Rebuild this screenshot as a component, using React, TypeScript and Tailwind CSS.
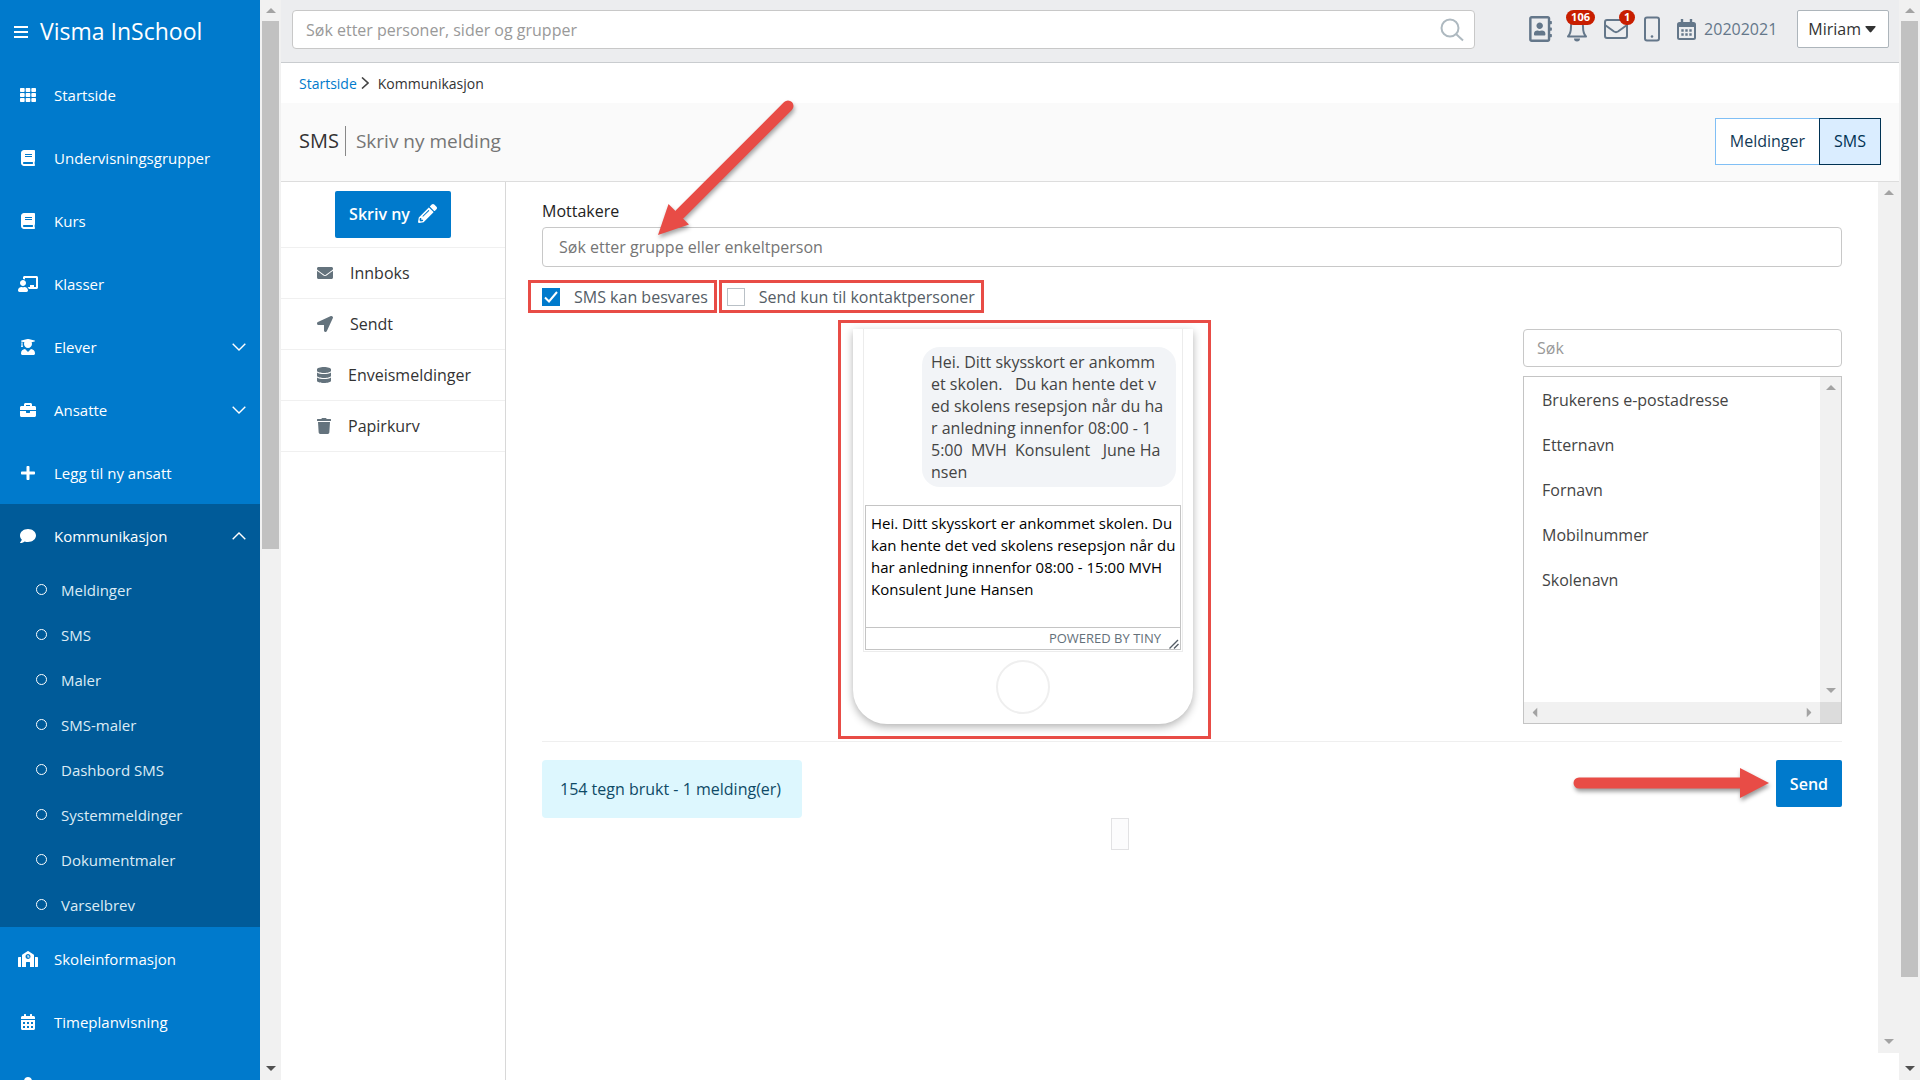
import type { ReactNode } from 'react';
import {
  FaBook,
  FaBriefcase,
  FaCalendarAlt,
  FaChalkboardTeacher,
  FaComment,
  FaDatabase,
  FaEnvelope,
  FaLocationArrow,
  FaPencilAlt,
  FaPlus,
  FaRegAddressBook,
  FaSchool,
  FaTh,
  FaTrash,
  FaUser,
  FaUserGraduate,
} from 'react-icons/fa';

const communicationLinks = [
  'Meldinger',
  'SMS',
  'Maler',
  'SMS-maler',
  'Dashbord SMS',
  'Systemmeldinger',
  'Dokumentmaler',
  'Varselbrev',
];

const folders = [
  { label: 'Innboks', icon: <FaEnvelope className="size-4" /> },
  { label: 'Sendt', icon: <FaLocationArrow className="size-4" /> },
  { label: 'Enveismeldinger', icon: <FaDatabase className="h-4 w-[14px]" /> },
  { label: 'Papirkurv', icon: <FaTrash className="h-4 w-[14px]" /> },
];

const mergeFields = ['Brukerens e-postadresse', 'Etternavn', 'Fornavn', 'Mobilnummer', 'Skolenavn'];

const previewText = [
  'Hei. Ditt skysskort er ankomm',
  'et skolen.   Du kan hente det v',
  'ed skolens resepsjon når du ha',
  'r anledning innenfor 08:00 - 1',
  '5:00  MVH  Konsulent   June Ha',
  'nsen',
].join('\n');

const messageText = [
  'Hei. Ditt skysskort er ankommet skolen. Du',
  'kan hente det ved skolens resepsjon når du',
  'har anledning innenfor 08:00 - 15:00 MVH',
  'Konsulent June Hansen',
].join('\n');

function Arrow({ className }: { className: string }) {
  return (
    <svg viewBox="0 0 10 5" className={`h-[5px] w-[10px] shrink-0 ${className}`} fill="currentColor">
      <path d="M0 5 5 0l5 5z" />
    </svg>
  );
}

function Scrollbar({ thumb, className = '' }: { thumb?: string; className?: string }) {
  return (
    <div className={`flex w-[21px] shrink-0 flex-col items-center bg-[#f1f1f1] ${className}`}>
      <div className="flex h-[21px] shrink-0 items-center">
        <Arrow className="text-[#a3a3a3]" />
      </div>
      <div className="min-h-0 w-full flex-1 px-[2px]">{thumb && <div className={`bg-[#c1c1c1] ${thumb}`} />}</div>
      <div className="flex h-6 shrink-0 items-center">
        <Arrow className={thumb ? 'rotate-180 text-[#505050]' : 'rotate-180 text-[#a3a3a3]'} />
      </div>
    </div>
  );
}

function Chevron({ open = false }: { open?: boolean }) {
  return (
    <svg viewBox="0 0 14 8" className={`h-2 w-[14px] ${open ? 'rotate-180' : ''}`} fill="none" stroke="currentColor" strokeWidth="1.4">
      <path d="M.7.7 7 7 13.3.7" />
    </svg>
  );
}

function NavItem({ icon, label, chevron }: { icon: ReactNode; label: string; chevron?: ReactNode }) {
  return (
    <a href="#" className="flex h-[63px] items-center pr-[14px] pl-[18px]">
      <span className="flex w-5 shrink-0 justify-center">{icon}</span>
      <span className="ml-4 flex-1 pt-[2px]">{label}</span>
      {chevron}
    </a>
  );
}

function Sidebar() {
  return (
    <aside className="flex w-[281px] shrink-0">
      <nav className="min-w-0 flex-1 overflow-hidden bg-[#007acc] text-[15px] text-white">
        <div className="flex h-[63px] items-center gap-3 pl-[14px]">
          <button type="button" aria-label="Meny" className="flex w-[14px] flex-col gap-[3px]">
            <span className="h-[2px] bg-white" />
            <span className="h-[2px] bg-white" />
            <span className="h-[2px] bg-white" />
          </button>
          <span className="text-[23px] font-medium">Visma InSchool</span>
        </div>
        <NavItem icon={<FaTh className="size-4" />} label="Startside" />
        <NavItem icon={<FaBook className="size-4" />} label="Undervisningsgrupper" />
        <NavItem icon={<FaBook className="size-4" />} label="Kurs" />
        <NavItem icon={<FaChalkboardTeacher className="h-4 w-5" />} label="Klasser" />
        <NavItem icon={<FaUserGraduate className="size-4" />} label="Elever" chevron={<Chevron />} />
        <NavItem icon={<FaBriefcase className="size-4" />} label="Ansatte" chevron={<Chevron />} />
        <NavItem icon={<FaPlus className="size-4" />} label="Legg til ny ansatt" />
        <div className="bg-[#005b99]">
          <NavItem icon={<FaComment className="size-4" />} label="Kommunikasjon" chevron={<Chevron open />} />
          {communicationLinks.map((label) => (
            <a key={label} href="#" className="flex h-[45px] items-center gap-[14px] pl-9 text-[#dcebf5]">
              <span className="size-[11px] rounded-full border border-white" />
              <span className="pt-[2px]">{label}</span>
            </a>
          ))}
        </div>
        <NavItem icon={<FaSchool className="h-4 w-5" />} label="Skoleinformasjon" />
        <NavItem icon={<FaCalendarAlt className="size-4" />} label="Timeplanvisning" />
        <a href="#" aria-label="Bruker" className="flex h-[63px] items-center pl-5">
          <FaUser className="size-4" />
        </a>
      </nav>
      <Scrollbar thumb="h-[51%]" />
    </aside>
  );
}

function Badge({ className, children }: { className: string; children: ReactNode }) {
  return (
    <span
      className={`absolute flex h-[15px] items-center rounded-full bg-[#c81e00] px-[5px] text-[11px] font-bold text-white ${className}`}
    >
      {children}
    </span>
  );
}

function TopBar() {
  return (
    <header className="flex h-[63px] shrink-0 items-start border-b border-[#c9cccf] bg-[#ecedef] pt-[10px] pr-[10px] pl-[11px]">
      <div className="flex h-[39px] flex-1 items-center rounded border border-[#c8c8c8] bg-white pr-[10px]">
        <input
          type="text"
          aria-label="Søk etter personer, sider og grupper"
          placeholder="Søk etter personer, sider og grupper"
          className="h-full min-w-0 flex-1 px-[13px] outline-none placeholder:text-[#999]"
        />
        <svg viewBox="0 0 24 24" className="size-6" fill="none" stroke="#aeb9c0" strokeWidth="2">
          <circle cx="10" cy="10" r="8.5" />
          <path d="m16 16 7 6.5" />
        </svg>
      </div>
      <div className="ml-[54px] flex h-[38px] items-center text-[#64778a]">
        <button type="button" aria-label="Kontakter">
          <FaRegAddressBook className="h-[26px] w-[23px]" />
        </button>
        <button type="button" aria-label="Varsler" className="relative ml-[14px]">
          <svg viewBox="0 0 22 26" className="h-[26px] w-[22px]" fill="none" stroke="currentColor" strokeWidth="2">
            <path d="M2 20.500c2.500-2.500 3-5 3-10C5 5.500 7.500 3 11 3s6 2.500 6 7.500c0 5 .5 7.500 3 10z" strokeLinejoin="round" />
            <path d="M8 22.500h6a3 3 0 0 1-6 0z" fill="currentColor" stroke="none" />
          </svg>
          <Badge className="-top-[6px] left-0">106</Badge>
        </button>
        <button type="button" aria-label="Meldinger" className="relative ml-4">
          <svg viewBox="0 0 24 20" className="h-5 w-6" fill="none" stroke="currentColor" strokeWidth="2">
            <rect x="1" y="1" width="22" height="18" rx="2" />
            <path d="m1 6 9 6.500q2 1.300 4 0L23 6" />
          </svg>
          <Badge className="-top-[9px] left-[15px]">1</Badge>
        </button>
        <button type="button" aria-label="Mobil" className="ml-4">
          <svg viewBox="0 0 16 26" className="h-[26px] w-4" fill="none" stroke="currentColor" strokeWidth="2">
            <rect x="1" y="1.500" width="14" height="23" rx="2" />
            <circle cx="8" cy="20.500" r="1.300" fill="currentColor" stroke="none" />
          </svg>
        </button>
        <button type="button" className="ml-[17px] flex items-center gap-2 font-medium">
          <svg viewBox="0 0 19 21" className="h-[21px] w-[19px]" fill="none" stroke="currentColor" strokeWidth="2">
            <rect x="1" y="4" width="17" height="16" rx="1.500" />
            <path d="M1 6.500h17" strokeWidth="3" />
            <path d="M5 0v5M14 0v5" strokeWidth="2.400" />
            <path d="M4.300 11.500h2.400M8.300 11.500h2.400M12.300 11.500h2.400M4.300 15.500h2.400M8.300 15.500h2.400M12.300 15.500h2.400" strokeWidth="2.400" />
          </svg>
          20202021
        </button>
      </div>
      <button
        type="button"
        className="ml-5 flex h-[38px] items-center gap-1 rounded-[2px] border border-[#adb5bb] bg-white pr-3 pl-[10px] font-medium text-[#333]"
      >
        Miriam
        <svg viewBox="0 0 11 7" className="h-[7px] w-[11px]" fill="currentColor">
          <path d="M1 0h9q1 0 .5 1L6.300 6q-.8.800-1.600 0L.5 1Q0 0 1 0z" />
        </svg>
      </button>
    </header>
  );
}

function PageHeader() {
  return (
    <>
      <div className="flex h-10 shrink-0 items-center pl-[18px] text-[14px]">
        <a href="#" className="text-[#007acc]">
          Startside
        </a>
        <svg viewBox="0 0 8 12" className="mr-[9px] ml-1 h-3 w-2" fill="none" stroke="#444" strokeWidth="1.600">
          <path d="m1 .5 6 5.500-6 5.500" />
        </svg>
        <span className="font-medium text-[#333]">Kommunikasjon</span>
      </div>
      <div className="flex h-[79px] shrink-0 items-center justify-between border-b border-[#ddd] bg-[#fafafa] px-[18px] pb-[2px]">
        <h1 className="flex items-center text-[20px]">
          <span className="border-r border-[#888] pr-[6px]">SMS</span>
          <span className="ml-[10px] text-[19px] text-[#757575]">Skriv ny melding</span>
        </h1>
        <div className="flex h-[47px]">
          <button type="button" className="border border-r-0 border-[#80bff5] bg-white px-[14px] text-[#123a56]">
            Meldinger
          </button>
          <button type="button" className="border border-[#003253] bg-[#daedff] px-[14px] font-medium text-[#003253]">
            SMS
          </button>
        </div>
      </div>
    </>
  );
}

function FolderList() {
  return (
    <div className="w-[225px] shrink-0 border-r border-[#d8d8d8] pt-[9px]">
      <button
        type="button"
        className="mx-auto mb-[9px] flex h-[47px] items-center gap-2 rounded-[2px] bg-[#007acc] px-[14px] pb-[2px] font-semibold text-white"
      >
        Skriv ny
        <FaPencilAlt className="size-[19px]" />
      </button>
      <ul className="border-t border-[#f0f0f0]">
        {folders.map(({ label, icon }) => (
          <li key={label} className="border-b border-[#f0f0f0]">
            <a href="#" className="flex h-[50px] items-center gap-[17px] pb-[1px] pl-9">
              <span className="text-[#64737d]">{icon}</span>
              {label}
            </a>
          </li>
        ))}
      </ul>
    </div>
  );
}

function Option({ label, className, checked = false }: { label: string; className: string; checked?: boolean }) {
  return (
    <label className={`flex h-[33px] items-center gap-[14px] border-[3px] border-[#e84c46] pr-[6px] text-[#555d66] ${className}`}>
      <span className="relative flex">
        <input
          type="checkbox"
          defaultChecked={checked}
          className="peer size-[18px] appearance-none border border-[#b9c0c6] bg-white checked:border-[#007acc] checked:bg-[#007acc]"
        />
        <svg viewBox="0 0 18 18" className="absolute inset-0 hidden size-[18px] peer-checked:block" fill="none" stroke="#fff" strokeWidth="2">
          <path d="m3 9.500 4 4 8-9.500" />
        </svg>
      </span>
      {label}
    </label>
  );
}

function Phone() {
  return (
    <div className="relative flex w-[340px] flex-col rounded-b-[34px] bg-white px-[10px] pb-[10px] shadow-[0_3px_9px_rgba(0,0,0,0.3)]">
      <div className="border-x border-b border-[#ececec] px-[1px] pb-[1px]">
        <div className="flex justify-end py-[18px] pr-[5px]">
          <p className="w-[254px] rounded-[18px] bg-[#f2f4f7] px-[9px] py-1 leading-[22px] whitespace-pre text-[#444]">
            {previewText}
          </p>
        </div>
        <div className="border border-[#c4c4c4]">
          <textarea
            aria-label="Melding"
            defaultValue={messageText}
            className="block h-[121px] w-full resize-none overflow-hidden px-[5px] pt-[6px] font-['Open_Sans','Noto_Sans',sans-serif] text-[15px] leading-[22px] whitespace-pre text-black outline-none"
          />
          <div className="flex h-[22px] items-center justify-end gap-2 border-t border-[#c4c4c4] pr-[1px] text-[13px] text-[#64707a]">
            <span>POWERED BY TINY</span>
            <svg viewBox="0 0 10 10" className="size-[10px] self-end" fill="none" stroke="#555d66" strokeWidth="1.400">
              <path d="M.5 9.500 9 1M5 9.500 9.500 5" />
            </svg>
          </div>
        </div>
      </div>
      <button type="button" aria-label="Hjem" className="mx-auto mt-[8px] size-[54px] rounded-full border-2 border-[#efefef]" />
      <div className="pointer-events-none absolute -top-[9px] -right-[18px] -bottom-[15px] -left-[15px] border-[3px] border-[#e84c46]" />
    </div>
  );
}

function MergeFields() {
  return (
    <div className="flex flex-col gap-[9px]">
      <input
        type="text"
        aria-label="Søk i felter"
        placeholder="Søk"
        className="h-[38px] w-full rounded border border-[#c8c8c8] px-[13px] outline-none placeholder:text-[#999]"
      />
      <div className="flex flex-1 flex-col border border-[#c4c4c4]">
        <div className="flex flex-1">
          <ul className="flex-1 pl-[18px]">
            {mergeFields.map((field) => (
              <li key={field} className="flex h-[45px] items-center text-[#444]">
                {field}
              </li>
            ))}
          </ul>
          <Scrollbar />
        </div>
        <div className="flex h-[21px] bg-[#f1f1f1]">
          <div className="flex flex-1 items-center justify-between px-[6px] text-[#a3a3a3]">
            <Arrow className="-rotate-90" />
            <Arrow className="rotate-90" />
          </div>
          <div className="w-[21px] bg-[#dcdcdc]" />
        </div>
      </div>
    </div>
  );
}

function Compose() {
  return (
    <form className="min-w-0 flex-1 px-9 pt-[17px]">
      <div className="relative">
        <label htmlFor="recipients" className="block h-7 font-medium text-[#222]">
          Mottakere
        </label>
        <input
          id="recipients"
          type="text"
          placeholder="Søk etter gruppe eller enkeltperson"
          className="block h-10 w-full rounded border border-[#c8c8c8] px-4 outline-none placeholder:text-[#757575]"
        />
        <svg
          viewBox="0 0 150 150"
          className="pointer-events-none absolute -top-[100px] left-[108px] size-[150px] drop-shadow-[1px_3px_2px_rgba(0,0,0,0.35)]"
          fill="#e84c46"
        >
          <path d="m138 7-108 108" stroke="#e84c46" strokeWidth="11" strokeLinecap="round" />
          <path d="m8 136 10.500-31 20.500 20.500z" />
        </svg>
      </div>
      <div className="mt-[13px] -ml-[14px] flex gap-[2px]">
        <Option label="SMS kan besvares" className="pl-[11px]" checked />
        <Option label="Send kun til kontaktpersoner" className="pl-[5px]" />
      </div>
      <div className="mt-4 grid grid-cols-[1fr_319px] gap-[19px]">
        <div className="flex justify-center">
          <Phone />
        </div>
        <MergeFields />
      </div>
      <hr className="mt-[17px] border-[#efefef]" />
      <div className="mt-[18px] flex items-start justify-between">
        <output className="rounded bg-[#ddf7fe] py-[17px] pr-[21px] pl-[18px] text-[#0f4a66]">
          154 tegn brukt - 1 melding(er)
        </output>
        <div className="relative">
          <button type="submit" className="h-[47px] rounded-[2px] bg-[#007acc] px-[14px] font-semibold text-white">
            Send
          </button>
          <svg
            viewBox="0 0 200 40"
            className="pointer-events-none absolute top-[3px] right-[72px] h-10 w-[200px] drop-shadow-[1px_3px_2px_rgba(0,0,0,0.4)]"
            fill="#e84c46"
          >
            <path d="M9 20h165" stroke="#e84c46" strokeWidth="11" strokeLinecap="round" />
            <path d="m170 5 29 15-29 15z" />
          </svg>
        </div>
      </div>
      <div className="mr-[713px] ml-auto h-8 w-[18px] border border-[#e2e2e4] bg-[#fcfcfd]" />
    </form>
  );
}

export default function App() {
  return (
    <div className="flex h-screen overflow-hidden bg-white font-['Open_Sans','Noto_Sans',sans-serif] text-[16px] text-[#333]">
      <Sidebar />
      <main className="flex min-w-0 flex-1 flex-col">
        <TopBar />
        <PageHeader />
        <div className="flex min-h-0 flex-1">
          <FolderList />
          <Compose />
          <Scrollbar className="mb-[27px]" />
        </div>
      </main>
      <Scrollbar thumb="h-[92.4%]" />
    </div>
  );
}
